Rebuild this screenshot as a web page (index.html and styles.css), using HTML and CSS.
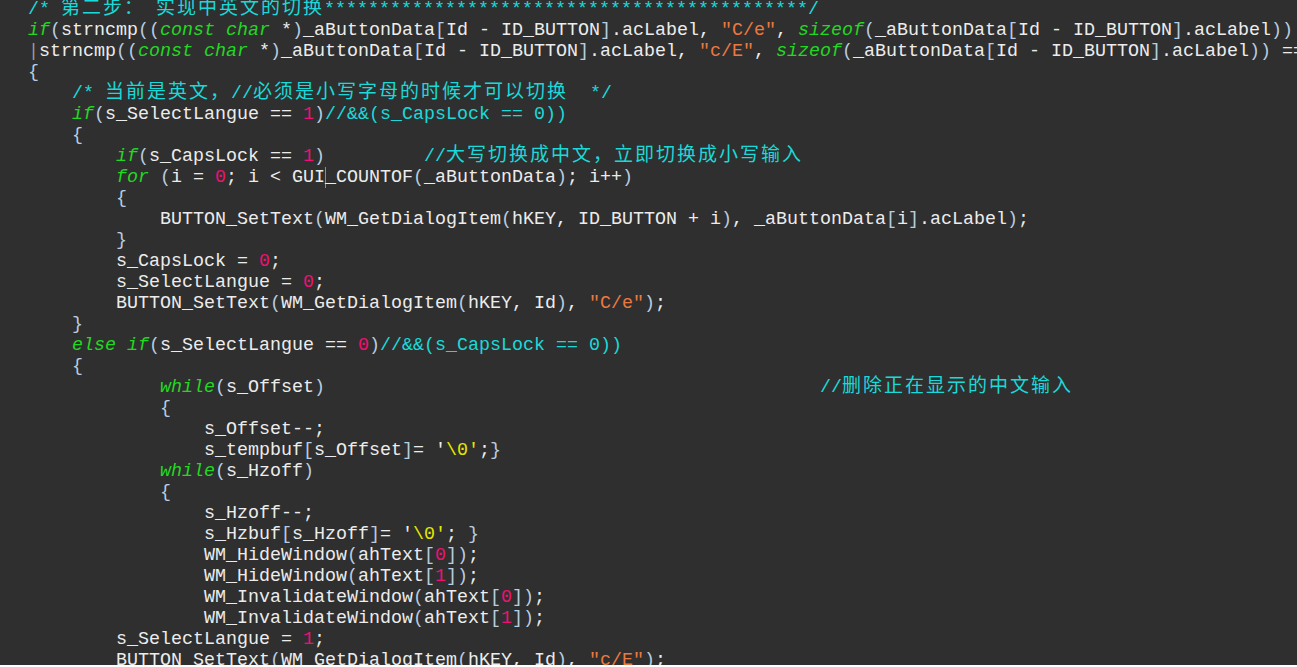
FILE: index.html
```html
<!DOCTYPE html>
<html lang="zh-CN">

<head>
  <meta charset="UTF-8" />
  <meta name="viewport" content="width=device-width, initial-scale=1.0" />
  <title>key.c</title>
  <link rel="stylesheet" href="styles.css">
</head>

<body>
  <div class="editor">
    <div class="code">
      <div class="ln"><span class="cm">/* <span class="cn">第二步：</span> <span class="cn">实现中英文的切换</span>********************************************/</span></div>
      <div class="ln"><span class="kw">if</span><span class="br">(</span>strncmp<span class="br">((</span><span class="kw">const char</span> *<span class="br">)</span>_aButtonData<span class="br">[</span>Id - ID_BUTTON<span class="br">]</span>.acLabel, <span class="str">"C/e"</span>, <span class="kw">sizeof</span><span class="br">(</span>_aButtonData<span class="br">[</span>Id - ID_BUTTON<span class="br">]</span>.acLabel<span class="br">))</span></div>
      <div class="ln"><span class="mark">|</span>strncmp<span class="br">((</span><span class="kw">const char</span> *<span class="br">)</span>_aButtonData<span class="br">[</span>Id - ID_BUTTON<span class="br">]</span>.acLabel, <span class="str">"c/E"</span>, <span class="kw">sizeof</span><span class="br">(</span>_aButtonData<span class="br">[</span>Id - ID_BUTTON<span class="br">]</span>.acLabel<span class="br">))</span> ==</div>
      <div class="ln"><span class="br">{</span></div>
      <div class="ln">    <span class="cm">/* <span class="cn">当前是英文，</span>//<span class="cn">必须是小写字母的时候才可以切换</span>  */</span></div>
      <div class="ln">    <span class="kw">if</span><span class="br">(</span>s_SelectLangue == <span class="num">1</span><span class="br">)</span><span class="cm">//&amp;&amp;(s_CapsLock == 0))</span></div>
      <div class="ln">    <span class="br">{</span></div>
      <div class="ln">        <span class="kw">if</span><span class="br">(</span>s_CapsLock == <span class="num">1</span><span class="br">)</span>         <span class="cm">//<span class="cn">大写切换成中文，立即切换成小写输入</span></span></div>
      <div class="ln">        <span class="kw">for</span> <span class="br">(</span>i = <span class="num">0</span>; i &lt; GUI<span class="caret"></span>_COUNTOF<span class="br">(</span>_aButtonData<span class="br">)</span>; i++<span class="br">)</span></div>
      <div class="ln">        <span class="br">{</span></div>
      <div class="ln">            BUTTON_SetText<span class="br">(</span>WM_GetDialogItem<span class="br">(</span>hKEY, ID_BUTTON + i<span class="br">)</span>, _aButtonData<span class="br">[</span>i<span class="br">]</span>.acLabel<span class="br">)</span>;</div>
      <div class="ln">        <span class="br">}</span></div>
      <div class="ln">        s_CapsLock = <span class="num">0</span>;</div>
      <div class="ln">        s_SelectLangue = <span class="num">0</span>;</div>
      <div class="ln">        BUTTON_SetText<span class="br">(</span>WM_GetDialogItem<span class="br">(</span>hKEY, Id<span class="br">)</span>, <span class="str">"C/e"</span><span class="br">)</span>;</div>
      <div class="ln">    <span class="br">}</span></div>
      <div class="ln">    <span class="kw">else if</span><span class="br">(</span>s_SelectLangue == <span class="num">0</span><span class="br">)</span><span class="cm">//&amp;&amp;(s_CapsLock == 0))</span></div>
      <div class="ln">    <span class="br">{</span></div>
      <div class="ln">            <span class="kw">while</span><span class="br">(</span>s_Offset<span class="br">)</span>                                             <span class="cm">//<span class="cn">删除正在显示的中文输入</span></span></div>
      <div class="ln">            <span class="br">{</span></div>
      <div class="ln">                s_Offset--;</div>
      <div class="ln">                s_tempbuf<span class="br">[</span>s_Offset<span class="br">]</span>= '<span class="chr">\0'</span>;<span class="br">}</span></div>
      <div class="ln">            <span class="kw">while</span><span class="br">(</span>s_Hzoff<span class="br">)</span></div>
      <div class="ln">            <span class="br">{</span></div>
      <div class="ln">                s_Hzoff--;</div>
      <div class="ln">                s_Hzbuf<span class="br">[</span>s_Hzoff<span class="br">]</span>= '<span class="chr">\0'</span>; <span class="br">}</span></div>
      <div class="ln">                WM_HideWindow<span class="br">(</span>ahText<span class="br">[</span><span class="num">0</span><span class="br">])</span>;</div>
      <div class="ln">                WM_HideWindow<span class="br">(</span>ahText<span class="br">[</span><span class="num">1</span><span class="br">])</span>;</div>
      <div class="ln">                WM_InvalidateWindow<span class="br">(</span>ahText<span class="br">[</span><span class="num">0</span><span class="br">])</span>;</div>
      <div class="ln">                WM_InvalidateWindow<span class="br">(</span>ahText<span class="br">[</span><span class="num">1</span><span class="br">])</span>;</div>
      <div class="ln">        s_SelectLangue = <span class="num">1</span>;</div>
      <div class="ln">        BUTTON_SetText<span class="br">(</span>WM_GetDialogItem<span class="br">(</span>hKEY, Id<span class="br">)</span>, <span class="str">"c/E"</span><span class="br">)</span>;</div>
    </div>
  </div>
</body>

</html>
```

FILE: styles.css
```css
* {
  margin: 0;
  padding: 0;
  box-sizing: border-box;
}

body {
  background-color: white;
  overflow: hidden;
}

.editor {
  height: 665px;
  background-color: #2f2f2f;
  overflow: hidden;
}

.code {
  margin-top: -1px;
  padding-left: 28px;
  font-family: "Liberation Mono", monospace;
  font-size: 18.333px;
  color: #ececec;
}

.ln {
  height: 21px;
  line-height: 21px;
  white-space: pre;
}

/* keep the CJK font from pushing the baseline down */
.cn {
  font-family: "Noto Sans CJK SC", sans-serif;
  font-size: 19px;
  line-height: 0;
  letter-spacing: 2px;
}

.kw {
  color: #22d822;
  font-style: italic;
}

.br {
  color: #b8cde0;
}

.num {
  color: #f01070;
}

.str {
  color: #ec7840;
}

.chr {
  color: #e6e600;
}

.cm {
  color: #1ad9d9;
}

.mark {
  color: #9a9a9a;
}

.caret {
  border-left: 1px solid #22d822;
  margin-right: -1px;
}
```
